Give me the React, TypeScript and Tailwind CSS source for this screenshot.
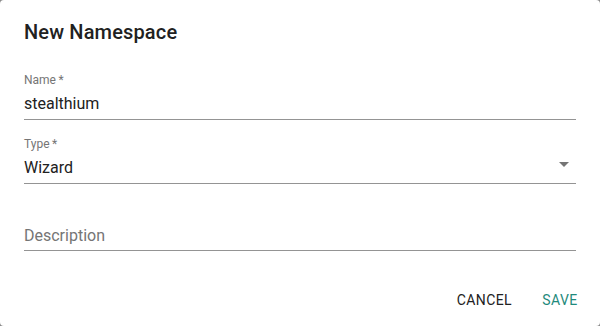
import React from "react";

function Field({ label, value, placeholder, select }: { label?: string; value?: string; placeholder?: string; select?: boolean }) {
  return (
    <div className="flex flex-col">
      <div className="h-[16px] text-[12px] leading-[16px] text-[#757575]">{label ?? ""}</div>
      <div className="h-[32px] pt-[6px] border-b border-[#949494] flex items-start justify-between">
        {value ? (
          <span className="text-[16px] leading-[19px] text-[#212121]">{value}</span>
        ) : (
          <span className="mt-[1px] text-[16px] leading-[19px] text-[#757575]">{placeholder}</span>
        )}
        {select && (
          <svg width="24" height="24" viewBox="0 0 24 24" className="-mt-[6px] shrink-0" fill="#757575">
            <path d="M7 10l5 5 5-5z" />
          </svg>
        )}
      </div>
    </div>
  );
}

export default function App() {
  return (
    <div className="w-[600px] h-[326px] bg-[#8a8a8a]" style={{ fontFamily: "Roboto, 'Liberation Sans', sans-serif" }}>
      <div className="w-full h-full bg-white rounded-[4px] flex flex-col">
        <div className="px-[24px] pt-[16px] h-[48px] text-[20px] leading-[32px] font-medium text-[#212121] tracking-[0.0075em]">
          New Namespace
        </div>
        <div className="px-[24px] flex flex-col">
          <div className="mt-[24px]">
            <Field label={"Name\u2009*"} value="stealthium" />
          </div>
          <div className="mt-[16px]">
            <Field label={"Type\u2009*"} value="Wizard" select />
          </div>
          <div className="mt-[19px]">
            <Field placeholder="Description" />
          </div>
        </div>
        <div className="mt-auto p-[8px] flex justify-end gap-[8px]">
          <button className="h-[36px] min-w-[64px] px-[8px] text-[14px] font-normal uppercase tracking-[0.02857em] text-[#212121]">
            Cancel
          </button>
          <button className="h-[36px] min-w-[64px] px-[8px] text-[14px] font-normal uppercase tracking-[0.02857em] text-[#1f8a7c]">
            Save
          </button>
        </div>
      </div>
    </div>
  );
}
